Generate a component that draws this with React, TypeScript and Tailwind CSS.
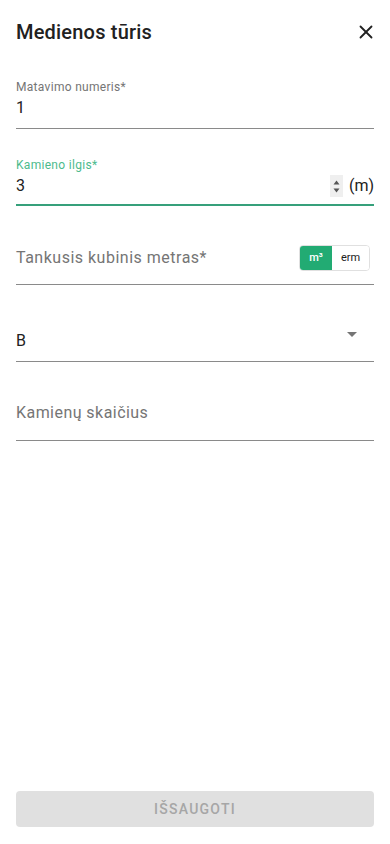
import { X } from 'lucide-react';

function Underline({ children, className = '' }: { children: React.ReactNode; className?: string }) {
  return <div className={`border-b border-[#8a8a8a] ${className}`}>{children}</div>;
}

export default function App() {
  return (
    <div className="w-[390px] h-[844px] bg-white flex flex-col px-4 font-['Roboto',sans-serif] text-[#212121]">
      {/* Header */}
      <div className="flex items-center justify-between pt-[20px] h-[64px] pb-[20px]">
        <h1 className="text-[20px] font-medium leading-6 tracking-[0.2px]">Medienos tūris</h1>
        <button className="w-6 h-6 flex items-center justify-center -mr-1">
          <X className="w-[22px] h-[22px] text-[#212121]" strokeWidth={2} />
        </button>
      </div>

      {/* Matavimo numeris */}
      <Underline className="mt-[15px] pb-[10px]">
        <p className="text-[12px] leading-4 text-[#757575] tracking-[0.3px]">Matavimo numeris*</p>
        <p className="text-[16px] leading-5 mt-[3px]">1</p>
      </Underline>

      {/* Kamieno ilgis */}
      <div className="mt-[28px] border-b-2 border-[#36a07b] pb-[8px]">
        <p className="text-[12px] leading-4 text-[#4dbb8d] tracking-[0.3px]">Kamieno ilgis*</p>
        <div className="flex items-center mt-[3px] h-[20px]">
          <span className="flex-1 text-[16px] leading-5">3</span>
          <div className="w-[13px] h-[22px] bg-[#efefef] flex flex-col items-center justify-center gap-[3px] mr-[6px]">
            <svg width="7" height="5" viewBox="0 0 7 5"><path d="M3.5 0.5L6.5 4.5H0.5Z" fill="#555" /></svg>
            <svg width="7" height="5" viewBox="0 0 7 5"><path d="M0.5 0.5H6.5L3.5 4.5Z" fill="#555" /></svg>
          </div>
          <span className="text-[16px] leading-5 text-[#212121]">(m)</span>
        </div>
      </div>

      {/* Tankusis kubinis metras */}
      <Underline className="mt-[39px] pb-[13px] flex items-center">
        <span className="flex-1 text-[16px] text-[#757575] tracking-[0.5px]">Tankusis kubinis metras*</span>
        <div className="flex h-[26px] rounded-[4px] border border-[#e0e0e0] overflow-hidden mr-[4px]">
          <span className="w-[32px] bg-[#22ab73] text-white text-[11px] font-medium flex items-center justify-center">m³</span>
          <span className="w-[37px] bg-white text-[#212121] text-[11px] flex items-center justify-center">erm</span>
        </div>
      </Underline>

      {/* Select B */}
      <Underline className="mt-[46px] pb-[10px] flex items-end relative">
        <span className="flex-1 text-[16px] leading-5">B</span>
        <svg className="absolute right-[17px] top-[1px]" width="10" height="5" viewBox="0 0 10 5">
          <path d="M0 0H10L5 5Z" fill="#757575" />
        </svg>
      </Underline>

      {/* Kamienų skaičius */}
      <Underline className="mt-[39px] pb-[15px]">
        <span className="text-[16px] text-[#757575] tracking-[0.45px]">Kamienų skaičius</span>
      </Underline>

      <div className="flex-1" />

      <button className="mb-[17px] h-[36px] rounded-[4px] bg-[#e0e0e0] text-[#a6a6a6] text-[14px] font-medium tracking-[1.25px]">
        IŠSAUGOTI
      </button>
    </div>
  );
}
